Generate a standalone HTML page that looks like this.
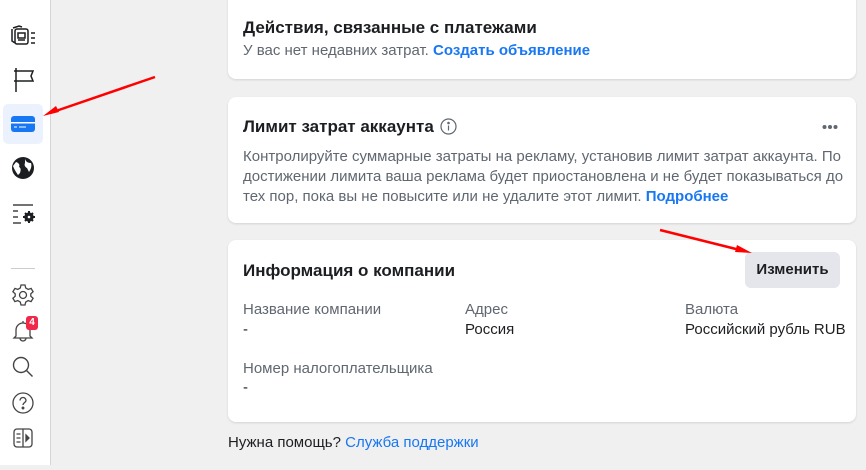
<!DOCTYPE html>
<html><head><meta charset="utf-8"><style>
*{box-sizing:border-box;margin:0;padding:0}
body{width:866px;height:470px;background:#f0f0f0;font-family:"Liberation Sans",sans-serif;position:relative;overflow:hidden;color:#1c1e21}
.side{position:absolute;left:0;top:0;width:51px;height:465px;background:#fff;border-right:1px solid #d6d6d6}
.card{position:absolute;left:228px;width:628px;background:#fff;border-radius:8px;box-shadow:0 1px 2px rgba(0,0,0,.12)}
h2{font-size:17px;font-weight:bold;color:#1c1e21}
.g{color:#606770;font-size:15px;line-height:20px}
a{color:#1877f2;font-weight:bold;text-decoration:none}
.lbl{position:absolute;font-size:15px;color:#606770}
.val{position:absolute;font-size:15px;color:#1c1e21}
svg{position:absolute}
</style></head><body>
<div class="side">
<svg style="left:10px;top:24px" width="28" height="24" viewBox="0 0 28 24" fill="none" stroke="#1c1e21" stroke-width="1.5"><path d="M3 4l6-2 3 1M2 5v12l3 2"/><rect x="5" y="5" width="13" height="15" rx="2"/><rect x="8" y="9" width="7" height="5"/><path d="M8 16h7M21 9h4M21 14h4M21 19h4"/></svg>
<svg style="left:13px;top:66px" width="22" height="26" viewBox="0 0 22 26" fill="none" stroke="#1c1e21" stroke-width="1.5"><path d="M3 2v24M3 5h17l-2 5 2 5H3M1 5h4M1 15h4"/></svg>
<div style="position:absolute;left:3px;top:104px;width:40px;height:40px;background:#ebf2fe;border-radius:5px"></div>
<svg style="left:11px;top:116px" width="24" height="16" viewBox="0 0 24 16"><rect width="24" height="16" rx="3" fill="#1877f2"/><rect x="0" y="6" width="24" height="1.5" fill="#fff"/><path d="M3 11h3M8 11h7" stroke="#fff" stroke-width="1"/></svg>
<svg style="left:11px;top:156px" width="24" height="24" viewBox="0 0 24 24"><circle cx="12" cy="12" r="11" fill="#1c1e21"/><path d="M5 6c3 1 4 3 3 5 2 1 2 3 1 6l-2 2c-2-3-4-6-5-9zM14 3c1 3 3 4 6 4 1 3 0 6-2 9l-2-4c-2-1-3-3-2-5z" fill="#fff"/></svg>
<svg style="left:12px;top:203px" width="24" height="22" viewBox="0 0 24 22" fill="none" stroke="#1c1e21" stroke-width="1.3"><path d="M1 2h20M1 8h5M1 14h5M1 20h8"/><circle cx="17" cy="14" r="4" fill="#1c1e21"/><path d="M17 8v12M11 14h12M13 10l8 8M21 10l-8 8" stroke-width="2"/><circle cx="17" cy="14" r="1.3" fill="#fff" stroke="none"/></svg>
<div style="position:absolute;left:11px;top:268px;width:24px;height:1px;background:#ccc"></div>
<svg style="left:12px;top:284px" width="22" height="22" viewBox="0 0 22 22" fill="none" stroke="#444" stroke-width="1.3"><circle cx="11" cy="11" r="3.5"/><path d="M9 1h4l.7 3 2.5 1.4 2.9-1 2 3.4-2.3 2v2.4l2.3 2-2 3.4-2.9-1-2.5 1.4L13 21H9l-.7-3-2.5-1.4-2.9 1-2-3.4 2.3-2V9.8L.9 7.8l2-3.4 2.9 1L8.3 4z"/></svg>
<svg style="left:12px;top:320px" width="22" height="22" viewBox="0 0 22 22" fill="none" stroke="#444" stroke-width="1.3"><path d="M4 16V10a7 7 0 0114 0v6l2 2H2zM8 18a3 3 0 006 0M11 3V1"/></svg>
<div style="position:absolute;left:26px;top:316px;width:12px;height:14px;background:#f0284a;border-radius:3px;color:#fff;font-size:10px;font-weight:bold;text-align:center;line-height:14px">4</div>
<svg style="left:12px;top:356px" width="22" height="22" viewBox="0 0 22 22" fill="none" stroke="#444" stroke-width="1.4"><circle cx="9" cy="9" r="7.5"/><path d="M14.5 14.5l6 6"/></svg>
<svg style="left:12px;top:392px" width="22" height="22" viewBox="0 0 22 22" fill="none" stroke="#444" stroke-width="1.3"><circle cx="11" cy="11" r="10"/><path d="M8 8.5a3 3 0 116 0c0 2-3 2-3 4.5"/><circle cx="11" cy="16" r=".8" fill="#444"/></svg>
<svg style="left:13px;top:428px" width="22" height="22" viewBox="0 0 22 22" fill="none" stroke="#444" stroke-width="1.3"><rect x="1" y="1" width="18" height="18" rx="3"/><path d="M10 1v18M3.5 6h4M3.5 10h4M3.5 14h4"/><path d="M13 7l3 3-3 3z" fill="#444"/></svg>
</div>
<svg style="left:30px;top:70px" width="140" height="60" viewBox="30 70 140 60"><path d="M155 77L50 113" stroke="#f00" stroke-width="2.5"/><path d="M43 116l13-10 3 6z" fill="#f00"/></svg>

<div class="card" style="top:-8px;height:87px">
<h2 style="position:absolute;left:15px;top:26px">Действия, связанные с платежами</h2>
<div class="g" style="position:absolute;left:15px;top:49px;color:#606770">У вас нет недавних затрат. <a>Создать объявление</a></div>
</div>

<div class="card" style="top:97px;height:126px">
<h2 style="position:absolute;left:15px;top:20px">Лимит затрат аккаунта</h2>
<svg style="left:212px;top:21px" width="17" height="17" viewBox="0 0 17 17" fill="none" stroke="#606770" stroke-width="1.2"><circle cx="8.5" cy="8.5" r="7.5"/><path d="M8.5 7.5v5"/><circle cx="8.5" cy="5" r=".7" fill="#606770"/></svg>
<svg style="left:594px;top:27px" width="16" height="6" viewBox="0 0 16 6" fill="#606770"><circle cx="2.5" cy="3" r="2"/><circle cx="8" cy="3" r="2"/><circle cx="13.5" cy="3" r="2"/></svg>
<div class="g" style="position:absolute;left:15px;top:50px;white-space:nowrap">Контролируйте суммарные затраты на рекламу, установив лимит затрат аккаунта. По<br>достижении лимита ваша реклама будет приостановлена и не будет показываться до<br>тех пор, пока вы не повысите или не удалите этот лимит. <a>Подробнее</a></div>
</div>

<div class="card" style="top:240px;height:182px">
<h2 style="position:absolute;left:15px;top:21px">Информация о компании</h2>
<div style="position:absolute;left:517px;top:12px;width:95px;height:36px;background:#e4e6eb;border-radius:6px;font-size:15px;font-weight:bold;text-align:center;line-height:36px">Изменить</div>
<div class="lbl" style="left:15px;top:61px">Название компании</div>
<div class="val" style="left:15px;top:81px">-</div>
<div class="lbl" style="left:237px;top:61px">Адрес</div>
<div class="val" style="left:237px;top:81px">Россия</div>
<div class="lbl" style="left:457px;top:61px">Валюта</div>
<div class="val" style="left:457px;top:81px">Российский рубль RUB</div>
<div class="lbl" style="left:15px;top:120px">Номер налогоплательщика</div>
<div class="val" style="left:15px;top:139px">-</div>
</div>
<svg style="left:650px;top:220px" width="110" height="40" viewBox="650 220 110 40"><path d="M660 230L740 250" stroke="#f00" stroke-width="2.5"/><path d="M752 253l-15-8-2 7z" fill="#f00"/></svg>
<div style="position:absolute;left:228px;top:434px;font-size:15px">Нужна помощь? <span style="color:#1877f2">Служба поддержки</span></div>
</body></html>
